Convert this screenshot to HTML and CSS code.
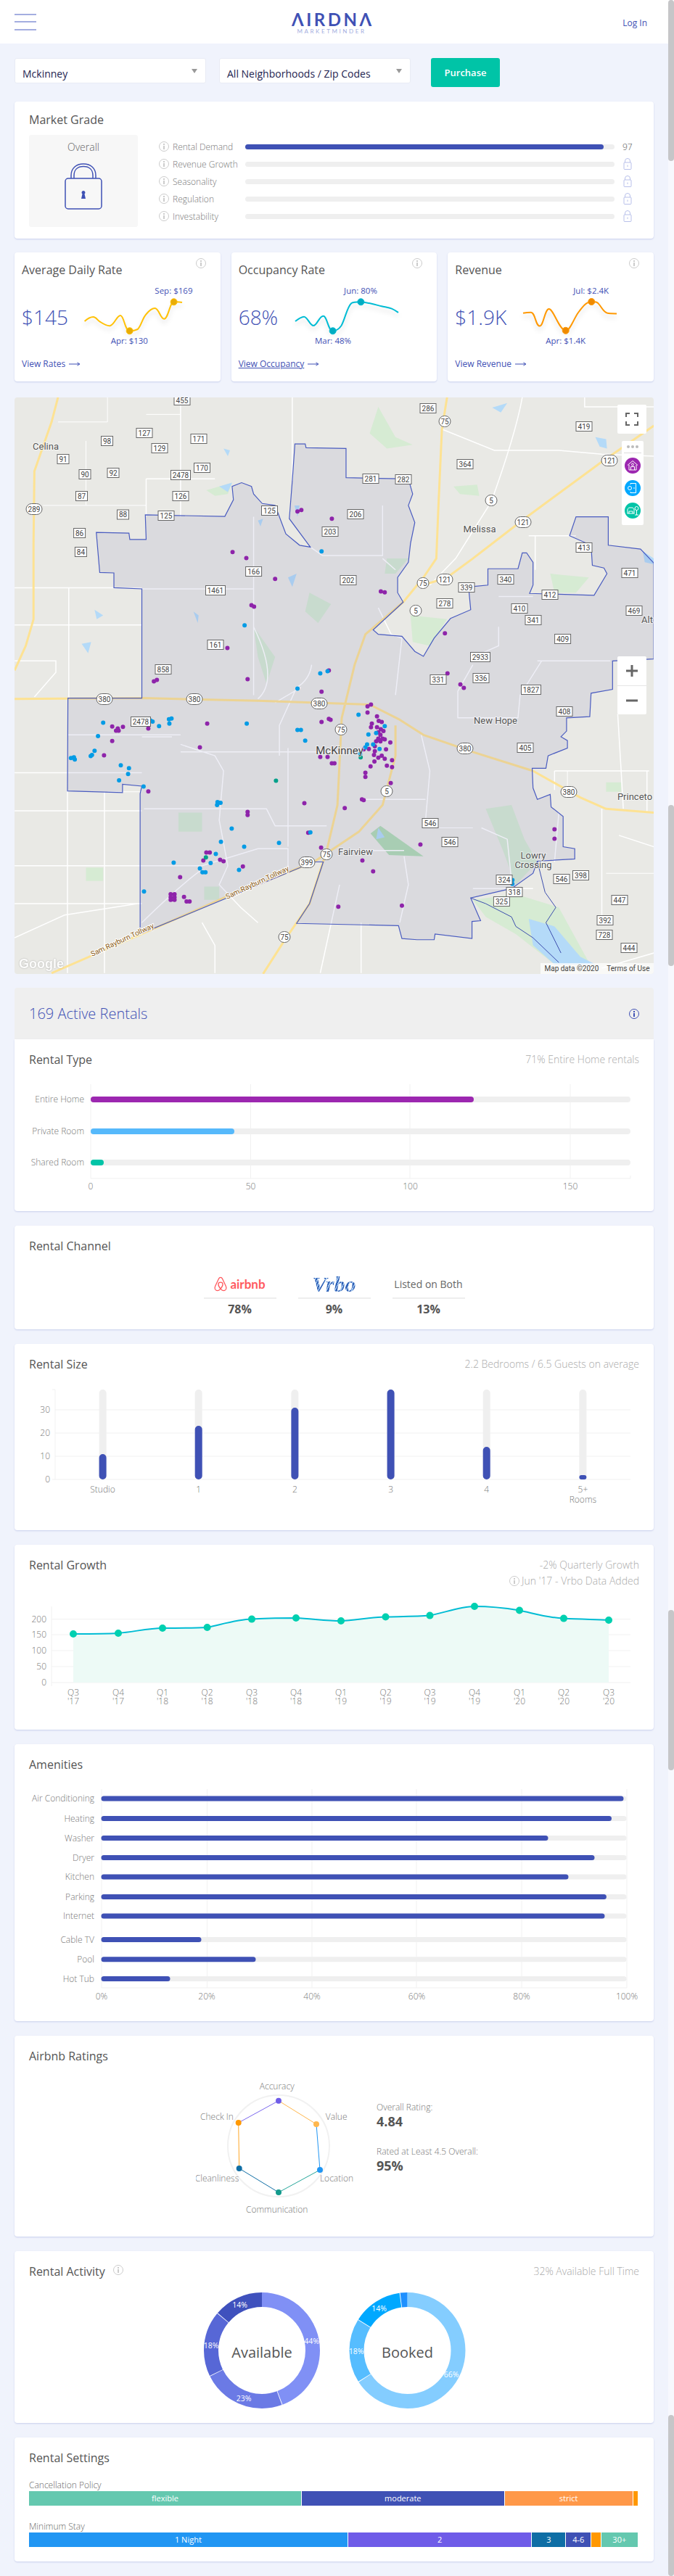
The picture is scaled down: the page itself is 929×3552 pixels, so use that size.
FILE: index.html
```html
<!DOCTYPE html>
<html lang="en">
<head>
  <meta charset="UTF-8" />
  <title>AirDNA MarketMinder – Mckinney</title>
  <link rel="stylesheet" href="styles.css">
</head>
<body>
  <header class="topbar">
    <div class="burger"><span></span><span></span><span></span></div>
    <div class="logo">
      <div class="logo-main">&#923;IRDN&#923;</div>
      <div class="logo-sub">MARKETMINDER</div>
    </div>
    <a class="login" href="#">Log In</a>
  </header>

  <main class="page">
    <div class="filters">
      <div class="select">Mckinney<i class="caret"></i></div>
      <div class="select">All Neighborhoods / Zip Codes<i class="caret"></i></div>
      <button class="purchase">Purchase</button>
    </div>

    <!-- MARKET GRADE -->
    <section class="card grade">
      <h2 class="title">Market Grade</h2>
      <div class="grade-body">
        <div class="overall">
          <div class="overall-label">Overall</div>
          <svg class="big-lock" viewBox="0 0 52 66" width="52" height="66">
            <path d="M9 22V18C9 8 16 2 26 2S43 8 43 18V22M13 22V18C13 10 18 5.500 26 5.500S39 10 39 18V22" />
            <rect x="1" y="22" width="50" height="42" rx="4" />
            <path class="solid" d="M26 39a2.500 2.500 0 0 1 1.500 4.500L29 50H23L24.500 43.500A2.500 2.500 0 0 1 26 39Z" />
          </svg>
        </div>
        <div class="grade-rows">
          <div class="grade-row"><i class="info"></i><span class="grade-name">Rental Demand</span><div class="track"><div class="fill" style="width:97%"></div></div><span class="grade-num">97</span></div>
          <div class="grade-row"><i class="info"></i><span class="grade-name">Revenue Growth</span><div class="track"></div><svg class="mini-lock" viewBox="0 0 12 16"><path d="M2.500 6V4a3.500 3.500 0 0 1 7 0V6"/><rect x="1" y="6" width="10" height="9.500" rx="1"/><path d="M6 9.500V12"/></svg></div>
          <div class="grade-row"><i class="info"></i><span class="grade-name">Seasonality</span><div class="track"></div><svg class="mini-lock" viewBox="0 0 12 16"><path d="M2.500 6V4a3.500 3.500 0 0 1 7 0V6"/><rect x="1" y="6" width="10" height="9.500" rx="1"/><path d="M6 9.500V12"/></svg></div>
          <div class="grade-row"><i class="info"></i><span class="grade-name">Regulation</span><div class="track"></div><svg class="mini-lock" viewBox="0 0 12 16"><path d="M2.500 6V4a3.500 3.500 0 0 1 7 0V6"/><rect x="1" y="6" width="10" height="9.500" rx="1"/><path d="M6 9.500V12"/></svg></div>
          <div class="grade-row"><i class="info"></i><span class="grade-name">Investability</span><div class="track"></div><svg class="mini-lock" viewBox="0 0 12 16"><path d="M2.500 6V4a3.500 3.500 0 0 1 7 0V6"/><rect x="1" y="6" width="10" height="9.500" rx="1"/><path d="M6 9.500V12"/></svg></div>
        </div>
      </div>
    </section>

    <!-- KPI CARDS -->
    <div class="kpis">
      <section class="card kpi">
        <div class="kpi-head"><h2 class="title">Average Daily Rate</h2><i class="info"></i></div>
        <div class="kpi-body">
          <div class="kpi-value">$145</div>
          <svg class="spark" viewBox="100 395 200 85" width="200" height="85">
            <path class="spark-line amber" d="M116.600 444C121 440 124 438 128.500 438C133 438 134 443 138.400 445C143 448 148 451 152.200 450C158 448 161 436 166 436C171 436 172 457.300 178.700 457.300C183 457.300 186 457 189.800 455C195 450 196 440 201.700 434C205 430 209 426 213.500 426C219 426 221 440.700 226.200 440.700C232 440.700 234 417.300 239.600 417.300C244 417 247 417 251 418"/>
            <circle class="amber-dot" cx="178.700" cy="457.300" r="4.500"/><circle class="amber-dot" cx="239.600" cy="417.300" r="4.500"/>
            <text class="spark-text" x="239.400" y="405.500">Sep: $169</text><text class="spark-text" x="178.300" y="475">Apr: $130</text>
          </svg>
        </div>
        <a class="kpi-link" href="#">View Rates<svg viewBox="0 0 16 8" width="16" height="8"><path d="M0 4H14M11.500 2L15 4L11.500 6"/></svg></a>
      </section>
      <section class="card kpi">
        <div class="kpi-head"><h2 class="title">Occupancy Rate</h2><i class="info"></i></div>
        <div class="kpi-body">
          <div class="kpi-value">68%</div>
          <svg class="spark" viewBox="399 395 200 85" width="200" height="85">
            <path class="spark-line cyan" d="M407 444C412 440 415 437.700 419 437.700C424 437.700 427 450 432 450C437 450 440 436.700 445.600 436.700C451 436.700 452 457.300 458.700 457.300C463 457.300 467 455 470.500 450C476 440 478 425 484.400 419C488 417 493 417.300 497.400 417.300C507 418 517 421 526 423.300C531 424.500 536 425 540 426.700C544 428.500 546 430 549 432"/>
            <circle class="cyan-dot" cx="458.700" cy="457.300" r="4.500"/><circle class="cyan-dot" cx="497.400" cy="417.300" r="4.500"/>
            <text class="spark-text" x="497" y="405.500">Jun: 80%</text><text class="spark-text" x="459" y="475">Mar: 48%</text>
          </svg>
        </div>
        <a class="kpi-link underlined" href="#"><span>View Occupancy</span><svg viewBox="0 0 16 8" width="16" height="8"><path d="M0 4H14M11.500 2L15 4L11.500 6"/></svg></a>
      </section>
      <section class="card kpi">
        <div class="kpi-head"><h2 class="title">Revenue</h2><i class="info"></i></div>
        <div class="kpi-body">
          <div class="kpi-value">$1.9K</div>
          <svg class="spark" viewBox="697 395 200 85" width="200" height="85">
            <path class="spark-line orange" d="M721 432.800C725 432 728 431.700 731.700 431.700C738 431.700 738 450.600 744 450.600C749 450.600 751 427 756.600 427C763 427 771 456.800 779.700 456.800C786 456.800 790 442 797 432C803 424 808 417 815.300 417C821 417 823 417 826 421C830 426 832 431 836.600 432.500C841 433.500 845 433.400 850 433.400"/>
            <circle class="orange-dot" cx="779.700" cy="456.800" r="4.500"/><circle class="orange-dot" cx="815.300" cy="417" r="4.500"/>
            <text class="spark-text" x="814.700" y="405.500">Jul: $2.4K</text><text class="spark-text" x="779.700" y="475">Apr: $1.4K</text>
          </svg>
        </div>
        <a class="kpi-link" href="#">View Revenue<svg viewBox="0 0 16 8" width="16" height="8"><path d="M0 4H14M11.500 2L15 4L11.500 6"/></svg></a>
      </section>
    </div>

    <!-- MAP -->
    <section class="map">
      <svg class="map-canvas" viewBox="0 0 881 795" width="881" height="795">
        <defs>
          <rect id="b2" class="box" x="-8" y="-6.500" width="16" height="13"/>
          <rect id="b3" class="box" x="-11" y="-6.500" width="22" height="13"/>
          <rect id="b4" class="box" x="-13.500" y="-6.500" width="27" height="13"/>
          <rect id="s1" class="box" x="-8" y="-7.500" width="16" height="15" rx="7.500"/>
          <rect id="s3" class="box" x="-11" y="-7.500" width="22" height="15" rx="7.500"/>
        </defs>
        <g transform="translate(-20 -8) scale(.5925 .523)">
          <!-- green -->
          <path class="green" d="M880 40L920 120L960 140L900 150L860 110ZM1055 250L1110 245L1115 275L1070 270ZM1130 1100L1190 1090L1220 1180L1250 1240L1200 1300L1170 1210ZM1100 1340L1200 1325L1300 1360L1370 1505L1290 1510L1200 1430L1130 1385ZM415 1110H470V1160H415ZM1410 1030H1445V1055H1410ZM200 1255H240V1290H200ZM475 1305H510V1340H475ZM720 530L770 560L740 610L710 580ZM590 620L640 700L620 770L600 700ZM1280 480L1370 490L1340 530L1290 530ZM900 440H950L920 480H895ZM480 260L540 240L530 270L500 275ZM955 590L1040 600L1000 670L960 660Z"/>
          <path class="green-deep" d="M862 1165L885 1145L985 1225L905 1222Z"/>
          <!-- water -->
          <path class="water" d="M1145 42L1180 30L1165 55ZM1385 120L1410 125L1412 150L1395 145ZM520 150L535 155L530 170ZM685 300L697 300L692 330ZM510 250L540 240L530 265ZM670 490L690 480L680 515ZM450 580L462 590L460 610ZM220 575L240 590L225 600ZM190 665L212 660L205 690ZM600 340L612 335L606 355ZM1230 1390L1290 1410L1350 1490L1385 1510H1290L1240 1460ZM1495 420L1521 440V455L1500 450ZM880 1150L895 1175L875 1180Z"/>
          <!-- roads -->
          <path class="road" d="M420 15V330M340 230H500M340 230V330M680 15V235M1215 15Q1200 110 1143 290Q1110 350 1060 440L1000 510M1030 100L1150 155H1300L1400 165L1521 170M1360 15V40H1521M1230 380H1340M1245 380V470M34 517H330M34 615H330M34 710H130V740L80 805M160 517V808M330 520H590M590 330V800M590 620Q650 760 600 810M722 410L750 432H890V300M890 440L920 470M725 720Q720 760 690 780L650 880V960M335 1100H620L640 1145H760M420 930L500 960L520 1000L510 1130L530 1250L510 1300L560 1360L600 1400M400 910H330M158 905H420M34 1005H330M34 1105H330M157 1050V1533M243 1055V1533M34 1250H330M34 1350H330M330 1250H470L600 1205H670V1260M670 940V1200M420 950H800M980 905L1000 1000L990 1130M840 1075H990M1250 710H1420M1260 710L1210 800L1205 860H1065V790L1100 720M1160 620V670L1100 700M1160 540H1240M1290 1000H1510M1290 1000V1050M1437 850L1445 1000L1450 1100M1505 1000V1110M1400 1100V1400M940 1225L950 1300L930 1400M840 1400V1533M745 1533L790 1300M34 1440L150 1380L320 1350M470 1400L500 1460V1533M1300 1110L1290 1240M1120 1150L1180 1180L1190 1290M1100 1310H1240M1400 1520L1521 1480M880 570L910 640L935 650L920 800M700 780L640 820M1440 1170L1521 1200M330 1400Q420 1300 470 1260M820 1210H940"/>
          <path class="road-thin" d="M250 80H135M250 80V15M200 130V300M340 60H420M100 300H340M1410 1270H1521M1320 1000V1060M1100 1150H1020M250 1055H330"/>
          <!-- highways -->
          <path class="hwy" d="M135 15L120 80L80 210L78 400L78 600L60 670L34 735M1040 15L1028 100L1020 300L1015 440L985 490L938 555L850 640L825 720L795 860L785 1090L760 1210L720 1350L660 1450L612 1535M1521 90L1400 185L1220 335L1100 440L1040 490L985 510M34 810L330 808L600 815L860 825L930 865L985 905L1100 950L1240 1000L1350 1070L1410 1100L1521 1110M120 1533L370 1410L530 1330L730 1240L835 1160L890 1090L920 960L920 880"/>
          <!-- service area -->
          <path class="area" d="M224 371L300 373L302 390L340 390L338 325L523 329L543 285L540 250L562 240L585 250L590 270L610 295L640 300L655 345L665 375L697 405L722 410L673 335L680 235L686 138L710 138L712 148L805 150L805 227L950 230L960 270L950 300L965 345L955 400L950 450L925 490L925 530L938 555L868 628L880 640L935 645L965 685L985 698L1010 650L1048 598L1095 575L1090 515L1135 510L1135 467L1205 467L1215 425L1225 425L1240 450L1240 510L1232 532L1382 537L1412 480L1405 465L1378 458L1375 405L1325 380L1340 330L1415 330L1415 405L1490 415L1521 452V705L1425 710L1425 785L1375 795L1372 857L1318 860L1318 895L1305 910L1320 920L1320 940L1275 960L1270 993L1238 993L1240 1045L1250 1075L1280 1062L1282 1095L1310 1120L1310 1200L1337 1205L1337 1232L1250 1238L1240 1270L1190 1310L1095 1335L1118 1395L1098 1397L1098 1442L1012 1430L1010 1445L970 1445L935 1442L927 1408L690 1402L720 1350L752 1240L730 1240L326 1430L326 1060L330 1040L285 1035L285 1057L157 1053L158 808L330 808L330 520L265 517L265 478L232 477Z"/>
          <path class="river" d="M1095 1335L1130 1350L1190 1385L1200 1410L1240 1440L1300 1505M1250 1238L1268 1320L1293 1360L1270 1400L1305 1480"/>
          <!-- listings -->
          <path class="dot dot-purple" d="M692 316h.01M701 312h.01M772 335h.01M541 423h.01M573 439h.01M640 494h.01M886 527h.01M895 529h.01M585 563h.01M591 567h.01M529 676h.01M1035 637h.01M576 758h.01M358 764h.01M365 760h.01M765 735h.01M1041 743h.01M1071 772h.01M1079 781h.01M748 791h.01M855 830h.01M863 825h.01M855 846h.01M877 856h.01M765 863h.01M769 865h.01M748 871h.01M482 875h.01M865 875h.01M881 868h.01M888 871h.01M863 885h.01M877 885h.01M886 890h.01M892 895h.01M880 898h.01M261 883h.01M286 884h.01M274 888h.01M270 894h.01M276 894h.01M345 888h.01M261 921h.01M465 938h.01M885 905h.01M880 915h.01M890 915h.01M875 922h.01M885 922h.01M895 917h.01M908 925h.01M872 935h.01M858 942h.01M846 943h.01M872 948h.01M898 943h.01M242 959h.01M745 963h.01M762 963h.01M870 958h.01M888 960h.01M880 965h.01M895 968h.01M912 972h.01M871 975h.01M772 980h.01M778 980h.01M862 988h.01M900 986h.01M912 990h.01M850 1005h.01M850 1016h.01M909 1032h.01M345 1054h.01M842 1075h.01M846 1077h.01M708 1085h.01M802 1098h.01M576 1108h.01M576 1116h.01M717 1163h.01M978 1194h.01M747 1202h.01M1290 1154h.01M1290 1179h.01M480 1215h.01M488 1215h.01M473 1236h.01M512 1234h.01M520 1238h.01M565 1252h.01M843 1236h.01M868 1265h.01M419 1280h.01M397 1325h.01M406 1325h.01M397 1333h.01M406 1333h.01M397 1340h.01M406 1340h.01M428 1332h.01M434 1344h.01M441 1344h.01M935 1355h.01M787 1358h.01"/>
          <path class="dot dot-blue" d="M748 421h.01M569 616h.01M745 743h.01M762 737h.01M692 783h.01M834 852h.01M895 882h.01M240 873h.01M350 867h.01M355 870h.01M393 864h.01M399 862h.01M394 875h.01M370 882h.01M574 875h.01M692 892h.01M700 892h.01M875 900h.01M857 904h.01M228 908h.01M710 920h.01M868 930h.01M854 930h.01M850 938h.01M883 942h.01M220 947h.01M214 958h.01M211 961h.01M838 955h.01M165 966h.01M172 964h.01M174 970h.01M281 985h.01M300 993h.01M298 1008h.01M277 1025h.01M334 1041h.01M506 1082h.01M513 1084h.01M505 1090h.01M539 1152h.01M722 1162h.01M514 1187h.01M649 1190h.01M568 1200h.01M502 1219h.01M490 1243h.01M404 1242h.01M465 1257h.01M471 1267h.01M478 1267h.01M556 1261h.01M1192 1288h.01M1192 1298h.01M335 1318h.01"/>
          <path class="dot dot-teal" d="M839 964h.01M642 1026h.01M479 1228h.01"/>
        </g>
        <g class="road-nums">
          <use href="#b3" x="231" y="4"/><text x="231" y="7.500">455</text>
          <use href="#b3" x="570" y="15"/><text x="570" y="18.500">286</text>
          <use href="#b3" x="179" y="49"/><text x="179" y="52.500">127</text>
          <use href="#b3" x="785" y="40"/><text x="785" y="43.500">419</text>
          <use href="#b2" x="127.500" y="60"/><text x="127.500" y="63.500">98</text>
          <use href="#b3" x="254" y="57"/><text x="254" y="60.500">171</text>
          <use href="#b3" x="200" y="70"/><text x="200" y="73.500">129</text>
          <use href="#b2" x="67" y="85"/><text x="67" y="88.500">91</text>
          <use href="#b3" x="258.500" y="97"/><text x="258.500" y="100.500">170</text>
          <use href="#b2" x="136" y="104"/><text x="136" y="107.500">92</text>
          <use href="#b2" x="97" y="106"/><text x="97" y="109.500">90</text>
          <use href="#b4" x="229" y="107"/><text x="229" y="110.500">2478</text>
          <use href="#b3" x="621" y="92"/><text x="621" y="95.500">364</text>
          <use href="#b3" x="491" y="112"/><text x="491" y="115.500">281</text>
          <use href="#b3" x="536" y="113"/><text x="536" y="116.500">282</text>
          <use href="#b3" x="229" y="136"/><text x="229" y="139.500">126</text>
          <use href="#b2" x="92.500" y="136"/><text x="92.500" y="139.500">87</text>
          <use href="#b2" x="149.500" y="161.500"/><text x="149.500" y="165">88</text>
          <use href="#b3" x="209" y="163"/><text x="209" y="166.500">125</text>
          <use href="#b3" x="351.500" y="156"/><text x="351.500" y="159.500">125</text>
          <use href="#b3" x="470" y="161"/><text x="470" y="164.500">206</text>
          <use href="#b3" x="435" y="185"/><text x="435" y="188.500">203</text>
          <use href="#b2" x="89.600" y="187"/><text x="89.600" y="190.500">86</text>
          <use href="#b2" x="91.400" y="213"/><text x="91.400" y="216.500">84</text>
          <use href="#b3" x="785" y="207"/><text x="785" y="210.500">413</text>
          <use href="#b3" x="329.600" y="240"/><text x="329.600" y="243.500">166</text>
          <use href="#b3" x="848" y="242"/><text x="848" y="245.500">471</text>
          <use href="#b3" x="460" y="252"/><text x="460" y="255.500">202</text>
          <use href="#b3" x="677" y="251"/><text x="677" y="254.500">340</text>
          <use href="#b3" x="623" y="262"/><text x="623" y="265.500">339</text>
          <use href="#b4" x="277" y="266"/><text x="277" y="269.500">1461</text>
          <use href="#b3" x="738" y="272"/><text x="738" y="275.500">412</text>
          <use href="#b3" x="593" y="284"/><text x="593" y="287.500">278</text>
          <use href="#b3" x="696" y="291"/><text x="696" y="294.500">410</text>
          <use href="#b3" x="854" y="294"/><text x="854" y="297.500">469</text>
          <use href="#b3" x="715" y="307"/><text x="715" y="310.500">341</text>
          <use href="#b3" x="277" y="341"/><text x="277" y="344.500">161</text>
          <use href="#b3" x="755.600" y="333"/><text x="755.600" y="336.500">409</text>
          <use href="#b4" x="642" y="358"/><text x="642" y="361.500">2933</text>
          <use href="#b3" x="205" y="375"/><text x="205" y="378.500">858</text>
          <use href="#b3" x="643" y="387"/><text x="643" y="390.500">336</text>
          <use href="#b3" x="584" y="389"/><text x="584" y="392.500">331</text>
          <use href="#b4" x="712" y="403"/><text x="712" y="406.500">1827</text>
          <use href="#b3" x="758" y="433"/><text x="758" y="436.500">408</text>
          <use href="#b4" x="174" y="447"/><text x="174" y="450.500">2478</text>
          <use href="#b3" x="704" y="483"/><text x="704" y="486.500">405</text>
          <use href="#b3" x="573" y="587"/><text x="573" y="590.500">546</text>
          <use href="#b3" x="600" y="613"/><text x="600" y="616.500">546</text>
          <use href="#b3" x="754" y="664"/><text x="754" y="667.500">546</text>
          <use href="#b3" x="780.500" y="659"/><text x="780.500" y="662.500">398</text>
          <use href="#b3" x="675" y="665"/><text x="675" y="668.500">324</text>
          <use href="#b3" x="689" y="682"/><text x="689" y="685.500">318</text>
          <use href="#b3" x="671.400" y="695"/><text x="671.400" y="698.500">325</text>
          <use href="#b3" x="834" y="693"/><text x="834" y="696.500">447</text>
          <use href="#b3" x="814" y="721"/><text x="814" y="724.500">392</text>
          <use href="#b3" x="813" y="741"/><text x="813" y="744.500">728</text>
          <use href="#b3" x="847" y="759"/><text x="847" y="762.500">444</text>
          <use href="#s1" x="593" y="33"/><text x="593" y="36.500">75</text>
          <use href="#s3" x="820" y="87"/><text x="820" y="90.500">121</text>
          <use href="#s3" x="27" y="154"/><text x="27" y="157.500">289</text>
          <use href="#s1" x="657" y="142"/><text x="657" y="145.500">5</text>
          <use href="#s3" x="701" y="172"/><text x="701" y="175.500">121</text>
          <use href="#s1" x="563" y="256"/><text x="563" y="259.500">75</text>
          <use href="#s3" x="593" y="251"/><text x="593" y="254.500">121</text>
          <use href="#s1" x="553" y="294"/><text x="553" y="297.500">5</text>
          <use href="#s3" x="124" y="416"/><text x="124" y="419.500">380</text>
          <use href="#s3" x="248" y="416"/><text x="248" y="419.500">380</text>
          <use href="#s3" x="420" y="422"/><text x="420" y="425.500">380</text>
          <use href="#s1" x="450" y="458"/><text x="450" y="461.500">75</text>
          <use href="#s3" x="621" y="484"/><text x="621" y="487.500">380</text>
          <use href="#s3" x="764" y="544"/><text x="764" y="547.500">380</text>
          <use href="#s1" x="513" y="543"/><text x="513" y="546.500">5</text>
          <use href="#s1" x="430" y="630"/><text x="430" y="633.500">75</text>
          <use href="#s3" x="403" y="641"/><text x="403" y="644.500">399</text>
          <use href="#s1" x="372" y="744"/><text x="372" y="747.500">75</text>
        </g>
        <g class="places">
          <text x="43" y="72">Celina</text>
          <text x="641" y="186">Melissa</text>
          <text x="663" y="450">New Hope</text>
          <text class="big" x="448" y="492">McKinney</text>
          <text x="470" y="631">Fairview</text>
          <text x="855" y="555">Princeto</text>
          <text x="715" y="636">Lowry</text>
          <text x="715" y="649">Crossing</text>
          <text x="872" y="311">Alt</text>
        </g>
        <g class="toll">
          <text transform="translate(107 771) rotate(-25)">Sam Rayburn Tollway</text>
          <text transform="translate(293 692) rotate(-25)">Sam Rayburn Tollway</text>
        </g>
      </svg>

      <button class="map-full">
        <svg viewBox="0 0 18 18" width="18" height="18"><path d="M1 6V1H6M12 1H17V6M17 12V17H12M6 17H1V12"/></svg>
      </button>
      <div class="map-types">
        <div class="map-more"><i></i><i></i><i></i></div>
        <div class="map-type purple">
          <svg viewBox="0 0 22 22" width="22" height="22"><path d="M4 10.500L11 4.500L18 10.500M6 10V17H16V10M8.500 17V12.500H13.500V17"/><circle cx="11" cy="9.500" r="1.500"/></svg>
        </div>
        <div class="map-type blue">
          <svg viewBox="0 0 22 22" width="22" height="22"><path d="M8 6V4.500H15.500V17.500H8V16M13 10V12"/><circle cx="7" cy="11" r="2.500"/></svg>
        </div>
        <div class="map-type teal">
          <svg viewBox="0 0 22 22" width="22" height="22"><path d="M4 15V10C4 8 5.500 7 7 7H10C11.500 7 13 8 13 10V15M6 15V12H11V15M3.500 15H13.500M16.500 10V17M14 17H19"/><circle cx="16.500" cy="8" r="2.500"/></svg>
        </div>
      </div>
      <div class="map-zoom">
        <button><svg viewBox="0 0 18 18" width="18" height="18"><path d="M9 1V17M1 9H17"/></svg></button>
        <button><svg viewBox="0 0 18 18" width="18" height="18"><path d="M1 9H17"/></svg></button>
      </div>
      <div class="google">Google</div>
      <div class="map-credit"><span>Map data ©2020</span><span>Terms of Use</span></div>
    </section>

    <!-- ACTIVE RENTALS -->
    <div class="rentals">
      <div class="rentals-head">
        <h2>169 Active Rentals</h2>
        <i class="info info-blue"></i>
      </div>
      <section class="card flat-top type-card">
        <div class="card-head"><h2 class="title">Rental Type</h2><span class="note">71% Entire Home rentals</span></div>
        <svg class="chart" viewBox="20 1472 881 198" width="881" height="198">
          <path class="grid" d="M125 1495V1625M345.500 1495V1625M565 1495V1625M786 1495V1625M125 1625H869M869 1621V1625"/>
          <path class="bar-bg" d="M129 1516H865M129 1560H865M129 1603H865"/>
          <path class="bar purple-stroke" d="M129 1516H649"/>
          <path class="bar sky-stroke" d="M129 1560H319"/>
          <path class="bar teal-stroke" d="M129 1603H139"/>
          <g class="ylabels">
            <text x="116" y="1520">Entire Home</text>
            <text x="116" y="1564">Private Room</text>
            <text x="116" y="1607">Shared Room</text>
          </g>
          <g class="xlabels">
            <text x="125" y="1640">0</text>
            <text x="345.500" y="1640">50</text>
            <text x="565.500" y="1640">100</text>
            <text x="786" y="1640">150</text>
          </g>
        </svg>
      </section>
    </div>

    <section class="card channel-card">
      <div class="card-head"><h2 class="title">Rental Channel</h2></div>
      <div class="channels">
        <div class="channel">
          <div class="channel-logo airbnb">
            <svg viewBox="0 0 20 24" width="18" height="21"><path d="M10 1.500C8.600 1.500 7.800 2.300 7 3.900L2 14.500C1.200 16.300 1 17 1 18C1 20.600 3 22.500 5.300 22.500C7 22.500 8.500 21.300 10 19.500C11.500 21.300 13 22.500 14.700 22.500C17 22.500 19 20.600 19 18C19 17 18.800 16.300 18 14.500L13 3.900C12.200 2.300 11.400 1.500 10 1.500ZM10 19.500C7.800 16.800 6.500 14.300 6.500 12.500C6.500 10.500 8 9.300 10 9.300C12 9.300 13.500 10.500 13.500 12.500C13.500 14.300 12.200 16.800 10 19.500Z"/></svg>
            <span>airbnb</span>
          </div>
          <div class="channel-num">78%</div>
        </div>
        <div class="channel">
          <div class="channel-logo"><span class="vrbo">Vrbo</span></div>
          <div class="channel-num">9%</div>
        </div>
        <div class="channel">
          <div class="channel-logo both">Listed on Both</div>
          <div class="channel-num">13%</div>
        </div>
      </div>
    </section>

    <section class="card size-card">
      <div class="card-head"><h2 class="title">Rental Size</h2><span class="note">2.2 Bedrooms / 6.5 Guests on average</span></div>
      <svg class="chart" viewBox="20 1892 881 218" width="881" height="218">
        <path class="grid" d="M76 1916V2040M76 1944H869M76 1976H869M76 2008H869M72 2040H869M72 1916H76"/>
        <path class="col-bg" d="M141.600 1921V2035M273.700 1921V2035M406.400 1921V2035M538.600 1921V2035M670.700 1921V2035M803.400 1921V2035"/>
        <path class="col" d="M141.600 2010V2035M273.700 1971V2035M406.400 1946V2035M538.600 1921V2035M670.700 2000V2035"/>
        <rect class="col-stub" x="798.400" y="2034" width="10" height="6" rx="3"/>
        <g class="ylabels">
          <text x="69" y="1948">30</text><text x="69" y="1980">20</text><text x="69" y="2012">10</text><text x="69" y="2044">0</text>
        </g>
        <g class="xlabels">
          <text x="141.600" y="2058">Studio</text><text x="273.700" y="2058">1</text><text x="406.400" y="2058">2</text><text x="538.600" y="2058">3</text><text x="670.700" y="2058">4</text><text x="803.400" y="2058">5+</text><text x="803.400" y="2072">Rooms</text>
        </g>
      </svg>
    </section>

    <section class="card growth-card">
      <div class="card-head">
        <h2 class="title">Rental Growth</h2>
        <div class="note-stack">
          <div class="note">-2% Quarterly Growth</div>
          <div class="note"><i class="info"></i>Jun '17 - Vrbo Data Added</div>
        </div>
      </div>
      <svg class="chart" viewBox="20 2169 881 216" width="881" height="216">
        <path class="grid" d="M71 2215V2325M71 2232.600H869M71 2254H869M71 2276H869M71 2298H869M71 2320H869"/>
        <path class="growth-fill" d="M101 2253C120 2253 145 2253 163 2252C185 2250 205 2245 224 2245C245 2245 268 2245 285.600 2244C305 2240 328 2233 347 2232.600C365 2231 390 2231 408 2231C430 2232 450 2235 470 2235C490 2234 510 2230 531.500 2229.500C550 2229 575 2229 592.500 2227.600C615 2223 635 2215 654 2215C675 2215 695 2217 716 2220.500C737 2225 757 2231 777 2231.600C800 2233 820 2233 839 2234V2320H101Z"/>
        <path class="growth-line" d="M101 2253C120 2253 145 2253 163 2252C185 2250 205 2245 224 2245C245 2245 268 2245 285.600 2244C305 2240 328 2233 347 2232.600C365 2231 390 2231 408 2231C430 2232 450 2235 470 2235C490 2234 510 2230 531.500 2229.500C550 2229 575 2229 592.500 2227.600C615 2223 635 2215 654 2215C675 2215 695 2217 716 2220.500C737 2225 757 2231 777 2231.600C800 2233 820 2233 839 2234"/>
        <path class="growth-dots" d="M101 2253h.01M163 2252h.01M224 2245h.01M285.600 2244h.01M347 2232.600h.01M408 2231h.01M470 2235h.01M531.500 2229.500h.01M592.500 2227.600h.01M654 2215h.01M716 2220.500h.01M777 2231.600h.01M839 2234h.01"/>
        <g class="ylabels">
          <text x="64" y="2236.600">200</text><text x="64" y="2258">150</text><text x="64" y="2280">100</text><text x="64" y="2302">50</text><text x="64" y="2324">0</text>
        </g>
        <g class="xlabels">
          <text x="101" y="2338">Q3</text><text x="101" y="2350">'17</text>
          <text x="163" y="2338">Q4</text><text x="163" y="2350">'17</text>
          <text x="224" y="2338">Q1</text><text x="224" y="2350">'18</text>
          <text x="285.600" y="2338">Q2</text><text x="285.600" y="2350">'18</text>
          <text x="347" y="2338">Q3</text><text x="347" y="2350">'18</text>
          <text x="408" y="2338">Q4</text><text x="408" y="2350">'18</text>
          <text x="470" y="2338">Q1</text><text x="470" y="2350">'19</text>
          <text x="531.500" y="2338">Q2</text><text x="531.500" y="2350">'19</text>
          <text x="592.500" y="2338">Q3</text><text x="592.500" y="2350">'19</text>
          <text x="654" y="2338">Q4</text><text x="654" y="2350">'19</text>
          <text x="716" y="2338">Q1</text><text x="716" y="2350">'20</text>
          <text x="777" y="2338">Q2</text><text x="777" y="2350">'20</text>
          <text x="839" y="2338">Q3</text><text x="839" y="2350">'20</text>
        </g>
      </svg>
    </section>

    <section class="card amenities-card">
      <div class="card-head"><h2 class="title">Amenities</h2></div>
      <svg class="chart" viewBox="20 2444 881 343" width="881" height="343">
        <path class="grid" d="M140 2467V2741M285.600 2467V2741M430 2467V2741M574 2467V2741M719 2467V2741M864 2467V2741M140 2741H864"/>
        <path class="am-bg" d="M143 2480H860M143 2507.500H860M143 2534.500H860M143 2561.500H860M143 2588H860M143 2615.500H860M143 2642H860M143 2674.500H860M143 2701.700H860M143 2728.500H860"/>
        <path class="am" d="M143 2480H856M143 2507.500H839.500M143 2534.500H752M143 2561.500H816M143 2588H780M143 2615.500H832.400M143 2642H830M143 2674.500H274M143 2701.700H349M143 2728.500H231"/>
        <g class="ylabels">
          <text x="130" y="2484">Air Conditioning</text>
          <text x="130" y="2511.500">Heating</text>
          <text x="130" y="2538.500">Washer</text>
          <text x="130" y="2565.500">Dryer</text>
          <text x="130" y="2592">Kitchen</text>
          <text x="130" y="2619.500">Parking</text>
          <text x="130" y="2646">Internet</text>
          <text x="130" y="2678.500">Cable TV</text>
          <text x="130" y="2705.700">Pool</text>
          <text x="130" y="2732.500">Hot Tub</text>
        </g>
        <g class="xlabels">
          <text x="140" y="2757">0%</text><text x="285" y="2757">20%</text><text x="430" y="2757">40%</text><text x="574.500" y="2757">60%</text><text x="719" y="2757">80%</text><text x="864" y="2757">100%</text>
        </g>
      </svg>
    </section>

    <section class="card ratings-card">
      <div class="card-head"><h2 class="title">Airbnb Ratings</h2></div>
      <div class="ratings-body">
        <svg class="radar" viewBox="270 2846 240 238" width="240" height="238">
          <circle class="radar-ring" cx="384" cy="2959" r="70"/>
          <path stroke="#ffb74d" d="M384 2896.700L436 2929"/>
          <path stroke="#2196f3" d="M436 2929L441 2992"/>
          <path stroke="#26a69a" d="M441 2992L384 3023"/>
          <path stroke="#0f6ea5" d="M384 3023L329.700 2990"/>
          <path stroke="#ffa726" d="M329.700 2990L328.700 2927"/>
          <path stroke="#7b68ee" d="M328.700 2927L384 2896.700"/>
          <circle fill="#6f5ce8" cx="384" cy="2896.700" r="4"/>
          <circle fill="#ffb74d" cx="436" cy="2929" r="4"/>
          <circle fill="#2196f3" cx="441" cy="2992" r="4"/>
          <circle fill="#139a8c" cx="384" cy="3023" r="4"/>
          <circle fill="#0f6ea5" cx="329.700" cy="2990" r="4"/>
          <circle fill="#ff9800" cx="328.700" cy="2927" r="4"/>
          <g class="xlabels">
            <text x="381.700" y="2881">Accuracy</text>
            <text x="463.700" y="2923">Value</text>
            <text x="464" y="3008">Location</text>
            <text x="381.700" y="3051">Communication</text>
            <text x="299" y="3008">Cleanliness</text>
            <text x="299" y="2923">Check In</text>
          </g>
        </svg>
        <div class="rating-stats">
          <div class="stat"><div class="stat-label">Overall Rating:</div><div class="stat-value">4.84</div></div>
          <div class="stat"><div class="stat-label">Rated at Least 4.5 Overall:</div><div class="stat-value">95%</div></div>
        </div>
      </div>
    </section>

    <section class="card activity-card">
      <div class="card-head">
        <h2 class="title">Rental Activity<i class="info title-info"></i></h2>
        <span class="note">32% Available Full Time</span>
      </div>
      <svg class="chart" viewBox="20 3143 881 198" width="881" height="198">
        <g class="donut" transform="rotate(-90 361 3241)">
          <circle pathLength="100" stroke="#8090f5" stroke-dasharray="44.200 55.800" stroke-dashoffset="0" cx="361" cy="3241" r="70"/>
          <circle pathLength="100" stroke="#6b7ae5" stroke-dasharray="23.200 76.800" stroke-dashoffset="-44.400" cx="361" cy="3241" r="70"/>
          <circle pathLength="100" stroke="#5767d6" stroke-dasharray="18.200 81.800" stroke-dashoffset="-67.800" cx="361" cy="3241" r="70"/>
          <circle pathLength="100" stroke="#3f51bd" stroke-dasharray="13.800 86.200" stroke-dashoffset="-86.200" cx="361" cy="3241" r="70"/>
        </g>
        <g class="donut" transform="rotate(-90 561.500 3241)">
          <circle pathLength="100" stroke="#84cdff" stroke-dasharray="65.800 34.200" stroke-dashoffset="0" cx="561.500" cy="3241" r="70"/>
          <circle pathLength="100" stroke="#56bdff" stroke-dasharray="17.800 82.200" stroke-dashoffset="-66" cx="561.500" cy="3241" r="70"/>
          <circle pathLength="100" stroke="#00a8ff" stroke-dasharray="13.800 86.200" stroke-dashoffset="-84" cx="561.500" cy="3241" r="70"/>
          <circle pathLength="100" stroke="#1e90ff" stroke-dasharray="2 98" stroke-dashoffset="-98" cx="561.500" cy="3241" r="70"/>
        </g>
        <g class="donut-pct">
          <text x="429.600" y="3232">44%</text><text x="336" y="3311">23%</text><text x="291" y="3238">18%</text><text x="330.600" y="3182">14%</text>
          <text x="622" y="3278">66%</text><text x="491" y="3246">18%</text><text x="522.600" y="3187">14%</text>
        </g>
        <text class="donut-name" x="361" y="3251">Available</text>
        <text class="donut-name" x="561.500" y="3251">Booked</text>
      </svg>
    </section>

    <section class="card settings-card">
      <div class="card-head"><h2 class="title">Rental Settings</h2></div>
      <div class="settings">
        <div class="setting-label">Cancellation Policy</div>
        <div class="stack-bar">
          <div class="seg mint" style="width:44.700%">flexible</div>
          <div class="seg indigo" style="width:33.200%">moderate</div>
          <div class="seg peach" style="width:21%">strict</div>
          <div class="seg orange-seg" style="flex:1"></div>
        </div>
        <div class="setting-label second">Minimum Stay</div>
        <div class="stack-bar">
          <div class="seg azure" style="width:52.300%">1 Night</div>
          <div class="seg violet" style="width:30.100%">2</div>
          <div class="seg ocean" style="width:5.500%">3</div>
          <div class="seg indigo" style="width:4%">4-6</div>
          <div class="seg orange-seg" style="width:1.500%"></div>
          <div class="seg mint" style="flex:1">30+</div>
        </div>
      </div>
    </section>
  </main>

  <!-- stitched scrollbar pieces -->
  <div class="scrollbar"><i class="thumb-a"></i><i class="thumb-b"></i><i class="thumb-c"></i><i class="thumb-d"></i></div>
</body>
</html>
```
FILE: styles.css
```css
:root {
  --indigo: #3f51b5;
  --page: #f0f3fc;
  --text: #555;
  --muted: #888;
  --track: #efefef;
}
/* RESET & BASE */
* { margin:0; padding:0; box-sizing:border-box; }
html, body { height:3552px; overflow:hidden; }
body { position:relative; background:var(--page); color:var(--text); font-family:'Open Sans', sans-serif; font-size:12px; }
a { color:var(--indigo); text-decoration:none; }
button { border:0; font-family:inherit; }
svg { display:block; }

/* TOP BAR */
.topbar { height:60px; background:#fff; position:relative; display:flex; justify-content:space-between; align-items:center; padding:0 37px 0 20px; }
.burger { width:30px; height:23px; display:flex; flex-direction:column; justify-content:space-between; }
.burger span { height:2px; background:#a4aee0; }
.logo { position:absolute; left:402px; top:15px; width:110px; text-align:center; color:var(--indigo); }
.logo-main { font-family:Lato, sans-serif; font-size:24px; line-height:24px; letter-spacing:3.500px; font-weight:700; white-space:nowrap; }
.logo-sub { font-family:Lato, sans-serif; font-size:8px; line-height:9px; letter-spacing:2.600px; color:#a4aee0; white-space:nowrap; }
.login { font-size:12px; margin-top:2px; }

/* FILTERS */
.page { padding:20px 28px 0 20px; display:flex; flex-direction:column; gap:20px; }
.filters { display:flex; align-items:flex-start; height:40px; }
.select { width:264px; height:35px; background:#fff; border:1px solid #e8ebf5; border-radius:3px; margin-right:18px; padding:12px 10px 0; font-size:14px; line-height:18px; color:#1d2350; position:relative; }
.caret { position:absolute; right:11px; top:14px; border:4.500px solid transparent; border-top:6px solid #999; border-bottom:0; }
.purchase { width:95px; height:40px; margin-left:10px; background:#00c4a7; color:#fff; border-radius:3px; font-size:13px; font-weight:600; }

/* CARDS */
.card { background:#fff; border-radius:4px; box-shadow:0 1px 2px rgba(63,81,181,.22); }
.title { font-size:16px; font-weight:400; line-height:22px; color:var(--text); white-space:nowrap; }
.card-head { height:39px; padding:17px 20px 0; display:flex; justify-content:space-between; align-items:flex-start; }
.note { font-size:14px; font-weight:300; line-height:22px; color:#aaa; }
.note-stack { text-align:right; }
.note .info { display:inline-block; vertical-align:-2px; margin-right:3px; }
.chart { flex:none; }
.info { flex:none; display:block; width:14px; height:14px; border:1px solid #ccc; border-radius:50%; position:relative; }
.info::before { content:''; position:absolute; left:5px; top:5px; width:2px; height:5px; background:#ccc; }
.info::after { content:''; position:absolute; left:5px; top:2px; width:2px; height:2px; background:#ccc; }

/* MARKET GRADE */
.grade { height:189px; padding:14px 20px 0; }
.grade-body { display:flex; margin-top:10px; }
.overall { width:150px; height:127px; background:#f7f7f7; border-radius:3px; text-align:center; }
.overall-label { font-size:14px; font-weight:300; line-height:20px; margin-top:7px; color:#666; }
.big-lock { margin:11px auto 0; fill:none; stroke:var(--indigo); stroke-width:1.500; }
.big-lock .solid { fill:var(--indigo); stroke:none; }
.grade-rows { flex:1; padding:4px 0 0 29px; }
.grade-row { height:24px; display:flex; align-items:center; }
.grade-name { width:100px; margin-left:5px; font-size:12px; font-weight:300; color:#777; white-space:nowrap; }
.track { width:509px; height:7px; background:var(--track); border-radius:4px; }
.fill { height:100%; background:var(--indigo); border-radius:4px; }
.grade-num { margin-left:11px; font-size:12px; font-weight:300; }
.mini-lock { width:12px; height:16px; margin-left:12px; fill:none; stroke:#b8c0ea; stroke-width:1; }

/* KPI */
.kpis { display:grid; grid-template-columns:repeat(3, minmax(0, 1fr)); gap:15px; height:178px; margin-top:-1px; margin-bottom:1px; }
.kpi { padding:13px 10px 0; }
.kpi-head { height:22px; display:flex; justify-content:space-between; align-items:flex-start; padding-right:10px; }
.kpi-head .info { margin-top:-5px; }
.kpi-body { display:flex; align-items:center; height:85px; margin-top:11px; }
.kpi-value { width:70px; flex:none; font-size:28px; font-weight:300; color:var(--indigo); white-space:nowrap; }
.spark { flex:none; fill:none; overflow:visible; }
.spark-line { stroke-width:2; filter:drop-shadow(0 5px 3px rgba(0,0,0,.12)); }
.amber { stroke:#ffc107; }
.cyan { stroke:#00bcd4; }
.orange { stroke:#ff9800; }
.amber-dot { fill:#e8ac06; stroke:#ffc107; }
.cyan-dot { fill:#00acc1; stroke:#00bcd4; }
.orange-dot { fill:#ee8a00; stroke:#ff9800; }
.spark-text { fill:var(--indigo); stroke:none; font-size:11.500px; text-anchor:middle; }
.kpi-link { display:inline-flex; align-items:center; gap:5px; font-size:12px; line-height:16px; margin-top:15px; }
.kpi-link svg { fill:none; stroke:var(--indigo); stroke-width:1; }
.kpi-link.underlined span { text-decoration:underline; }

/* MAP */
.map { position:relative; width:881px; height:795px; border-radius:4px; overflow:hidden; margin-top:1px; background:#e9e9e5; }
.map-canvas path { fill:none; vector-effect:non-scaling-stroke; }
.map-canvas .green { fill:#d6ebd3; }
.map-canvas .green-deep { fill:#b2dbb6; }
.map-canvas .water { fill:#b4daf8; }
.map-canvas .road { stroke:#fff; stroke-width:1.500; }
.map-canvas .road-thin { stroke:#fff; stroke-width:1; }
.map-canvas .hwy { stroke:#fde293; stroke-width:3; stroke-linejoin:round; }
.map-canvas .area { fill:rgba(63,70,160,.09); stroke:#4a5cc0; stroke-width:1.200; }
.map-canvas .river { stroke:#3d4fae; stroke-width:1; }
.map-canvas .dot { stroke-width:6; stroke-linecap:round; }
.map-canvas .dot-purple { stroke:#8e24aa; }
.map-canvas .dot-blue { stroke:#039be5; }
.map-canvas .dot-teal { stroke:#00a08a; }
.box { fill:#fff; stroke:#666; stroke-width:1; }
.road-nums text { font-family:Roboto, sans-serif; font-size:10px; fill:#444; text-anchor:middle; }
.places text { font-family:Roboto, sans-serif; font-size:13px; fill:#555; text-anchor:middle; paint-order:stroke; stroke:#fff; stroke-width:2px; stroke-opacity:.6; }
.places .big { font-size:15px; fill:#444; }
.toll text { font-family:Roboto, sans-serif; font-size:10px; fill:#8a5a12; paint-order:stroke; stroke:#fff; stroke-width:2px; }
.map-full { position:absolute; left:831px; top:10px; width:40px; height:40px; background:#fff; display:flex; align-items:center; justify-content:center; border-radius:2px; }
.map-full svg { fill:none; stroke:#666; stroke-width:2; }
.map-types { position:absolute; left:837px; top:60px; width:30px; height:116px; background:#fff; border-radius:2px; display:flex; flex-direction:column; align-items:center; }
.map-more { height:18px; width:24px; display:flex; gap:2px; justify-content:center; align-items:center; border-bottom:1px solid #ddd; margin-bottom:6px; }
.map-more i { width:4px; height:4px; border-radius:50%; background:#bbb; }
.map-type { width:22px; height:22px; border-radius:50%; margin-bottom:9px; }
.map-type svg { fill:none; stroke:#fff; stroke-width:1; }
.map-type.purple { background:#9c27b0; }
.map-type.blue { background:#00a8ff; }
.map-type.teal { background:#00c4a7; }
.map-zoom { position:absolute; left:831px; top:357px; width:40px; height:80px; background:#fff; border-radius:2px; }
.map-zoom button { display:flex; width:40px; height:40px; background:none; align-items:center; justify-content:center; }
.map-zoom button + button { border-top:1px solid #e6e6e6; }
.map-zoom svg { fill:none; stroke:#666; stroke-width:3; }
.google { position:absolute; left:6px; top:771px; font-family:'Liberation Sans', sans-serif; font-size:18px; font-weight:700; color:#fff; opacity:.85; text-shadow:0 0 2px rgba(0,0,0,.35); }
.map-credit { position:absolute; right:0; bottom:0; width:156px; height:15px; background:rgba(255,255,255,.7); display:flex; justify-content:space-around; align-items:center; font-family:Roboto, sans-serif; font-size:10px; color:#444; }

/* ACTIVE RENTALS */
.rentals { margin-top:-1px; margin-bottom:0; }
.rentals-head { height:71px; background:var(--track); border-radius:4px 4px 0 0; display:flex; justify-content:space-between; align-items:center; padding:0 20px; }
.rentals-head h2 { font-size:20px; font-weight:300; color:var(--indigo); }
.info-blue { border-color:var(--indigo); }
.info-blue::before, .info-blue::after { background:var(--indigo); }
.flat-top { border-radius:0 0 4px 4px; }
.type-card { height:237px; }
.grid { fill:none; stroke:#f1f1f1; stroke-width:1; }
.bar-bg { fill:none; stroke:var(--track); stroke-width:8; stroke-linecap:round; }
.bar { fill:none; stroke-width:8; stroke-linecap:round; }
.purple-stroke { stroke:#9c27b0; }
.sky-stroke { stroke:#56b9fb; }
.teal-stroke { stroke:#00c4a7; }
.ylabels text { font-size:12px; font-weight:300; fill:#777; text-anchor:end; }
.xlabels text { font-size:12px; font-weight:300; fill:#777; text-anchor:middle; }

/* CHANNEL */
.channel-card { height:143px; }
.channels { display:flex; justify-content:center; gap:30px; margin-top:26px; }
.channel { width:100px; text-align:center; }
.channel-logo { height:36px; padding-bottom:3px; border-bottom:2px solid #eee; display:flex; justify-content:center; align-items:center; }
.airbnb { gap:4px; color:#ff5a5f; }
.airbnb svg { fill:none; stroke:#ff5a5f; stroke-width:1.500; }
.airbnb span { font-family:Lato, sans-serif; font-size:17px; font-weight:700; line-height:20px; }
.vrbo { font-family:'Liberation Serif', serif; font-style:italic; font-weight:700; font-size:30px; line-height:26px; color:transparent; background:repeating-linear-gradient(115deg, #2f5fb5 0 2px, #9cc3ee 2px 3.500px); -webkit-background-clip:text; background-clip:text; }
.both { font-size:14px; color:#666; }
.channel-num { font-size:16px; font-weight:700; color:var(--text); line-height:22px; margin-top:3px; }

/* SIZE, GROWTH, AMENITIES */
.size-card { height:257px; }
.col-bg { fill:none; stroke:var(--track); stroke-width:10; stroke-linecap:round; }
.col { fill:none; stroke:var(--indigo); stroke-width:10; stroke-linecap:round; }
.col-stub { fill:var(--indigo); }
.growth-card { height:255px; }
.growth-fill { fill:#edfaf6; }
.growth-line { fill:none; stroke:#00bcd4; stroke-width:2; }
.growth-dots { fill:none; stroke:#00d0b0; stroke-width:10; stroke-linecap:round; }
.amenities-card { height:382px; }
.am-bg { fill:none; stroke:var(--track); stroke-width:7; stroke-linecap:round; }
.am { fill:none; stroke:var(--indigo); stroke-width:7; stroke-linecap:round; }

/* RATINGS */
.ratings-card { height:277px; }
.ratings-body { display:flex; padding-left:250px; gap:9px; }
.radar { flex:none; fill:none; }
.radar-ring { stroke:#f1f1f1; stroke-width:2; }
.rating-stats { padding-top:52px; }
.stat { margin-bottom:23px; }
.stat-label { font-size:12px; line-height:16px; font-weight:300; color:#777; white-space:nowrap; }
.stat-value { font-size:18px; line-height:22px; font-weight:700; color:var(--text); }

/* ACTIVITY */
.activity-card { height:237px; }
.title-info { display:inline-block; margin-left:11px; vertical-align:1px; }
.donut circle { fill:none; stroke-width:20; }
.donut-pct text { font-size:10.500px; fill:#fff; text-anchor:middle; }
.donut-name { font-size:20px; fill:var(--text); text-anchor:middle; }

/* SETTINGS */
.settings-card { height:171px; }
.settings { padding:19px 22px 0 20px; }
.setting-label { font-size:12px; line-height:16px; font-weight:300; color:#666; }
.setting-label.second { margin-top:21px; }
.stack-bar { display:flex; height:20px; gap:1px; }
.seg { color:#fff; font-size:11px; line-height:20px; text-align:center; white-space:nowrap; }
.mint { background:#64c8af; }
.indigo { background:var(--indigo); }
.peach { background:#ff9848; }
.orange-seg { background:#ff9800; }
.azure { background:#2196f3; }
.violet { background:#6f5ce8; }
.ocean { background:#0f6ea5; }

/* SCROLLBAR PIECES */
.scrollbar { position:absolute; right:0; top:60px; bottom:0; width:8px; background:#f7f8fd; }
.scrollbar i { position:absolute; left:0; width:8px; background:#c6c6c8; border-radius:4px; }
.thumb-a { top:-60px; height:222px; }
.thumb-b { top:1050px; height:222px; }
.thumb-c { top:2160px; height:221px; }
.thumb-d { top:3270px; height:222px; }
```
